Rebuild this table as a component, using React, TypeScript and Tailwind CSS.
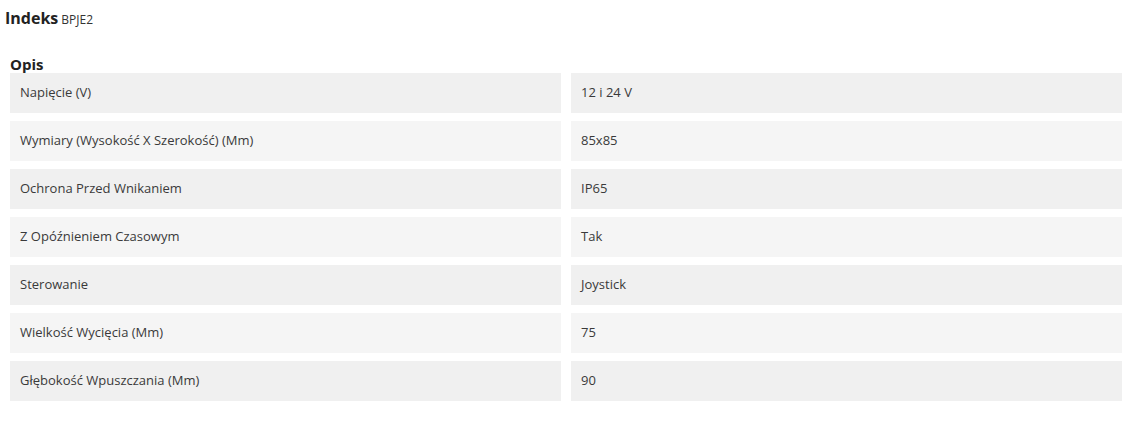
import React from 'react';

const rows: [string, string][] = [
  ['Napięcie (V)', '12 i 24 V'],
  ['Wymiary (Wysokość X Szerokość) (Mm)', '85x85'],
  ['Ochrona Przed Wnikaniem', 'IP65'],
  ['Z Opóźnieniem Czasowym', 'Tak'],
  ['Sterowanie', 'Joystick'],
  ['Wielkość Wycięcia (Mm)', '75'],
  ['Głębokość Wpuszczania (Mm)', '90'],
];

export default function App() {
  return (
    <div className="w-[1131px] h-[423px] bg-white text-[#222] font-['Open_Sans',sans-serif]">
      <div className="pl-[5px] pt-[8px] flex items-baseline gap-[3px]">
        <span className="text-[16px] font-bold leading-[20px]">Indeks</span>
        <span className="text-[12px] text-[#333]">BPJE2</span>
      </div>
      <div className="pl-[10px] pr-[9px] pt-[27px]">
        <h2 className="text-[15px] font-bold leading-[17px]">Opis</h2>
        <div className="flex flex-col gap-[8px]">
          {rows.map(([k, v], i) => (
            <div key={k} className="grid grid-cols-2 gap-[10px] text-[13px] text-[#3a3a3a]">
              <div className={`h-[40px] flex items-center px-[10px] ${i % 2 === 0 ? 'bg-[#f0f0f0]' : 'bg-[#f5f5f5]'}`}>{k}</div>
              <div className={`h-[40px] flex items-center px-[10px] ${i % 2 === 0 ? 'bg-[#f0f0f0]' : 'bg-[#f5f5f5]'}`}>{v}</div>
            </div>
          ))}
        </div>
      </div>
    </div>
  );
}
